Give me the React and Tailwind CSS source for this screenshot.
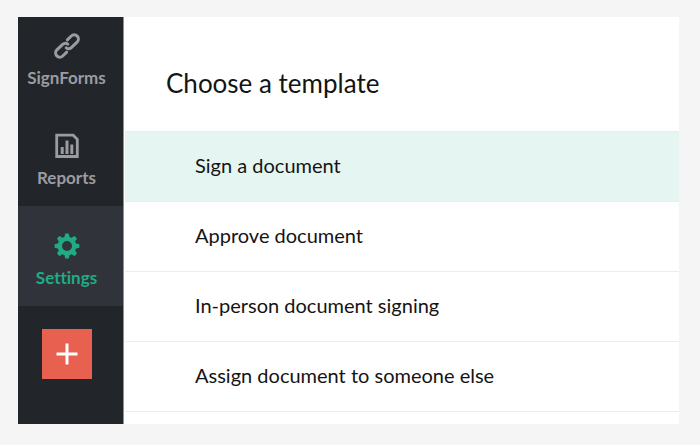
import { useState } from "react";
import clsx from "clsx";

const LinkIcon = () => (
  <svg viewBox="0 0 26 26" className="size-[26px] overflow-visible" fill="none" stroke="currentColor" strokeWidth="3" strokeLinecap="round" aria-hidden="true">
    <g transform="rotate(-44 13 13)">
      {/* lower left link, then upper right link */}
      <path d="M8.5 17.2H3a4.2 4.2 0 0 1 0-8.4h8a4.2 4.2 0 0 1 3.9 3.4" />
      <path d="M17.5 8.8H23a4.2 4.2 0 0 1 0 8.4h-8a4.2 4.2 0 0 1-3.9-3.4" />
    </g>
  </svg>
);

const ReportIcon = () => (
  <svg viewBox="0 0 26 26" className="size-[26px]" fill="none" stroke="currentColor" aria-hidden="true">
    <path d="M2.7 2.2h16.5l4.1 4.1v17.2H2.7z" strokeWidth="2.8" />
    <path d="M8.2 14v7M13 7.5v13.5M17.8 11.5v9.5" strokeWidth="3" />
  </svg>
);

const TEETH = [0, 45, 90, 135, 180, 225, 270, 315];

const GearIcon = () => (
  <svg viewBox="0 0 26 26" className="size-[26px]" fill="currentColor" aria-hidden="true">
    <circle cx="13" cy="13" r="7.2" fill="none" stroke="currentColor" strokeWidth="4.4" />
    {TEETH.map((a) => (
      <path key={a} d="M10.2 5.5L11 1.2Q11.1 .6 11.7 .6h2.6q.6 0 .7.6L15.8 5.5z" transform={`rotate(${a} 13 13)`} />
    ))}
  </svg>
);

const NAV = [
  { label: "SignForms", Icon: LinkIcon, pad: "pt-4" },
  { label: "Reports", Icon: ReportIcon, pad: "pt-[27px]" },
  { label: "Settings", Icon: GearIcon, pad: "pt-[27px]" },
];

const TEMPLATES = [
  "Sign a document",
  "Approve document",
  "In-person document signing",
  "Assign document to someone else",
];

const Sidebar = () => {
  const [active, setActive] = useState("Settings");

  return (
    <nav className="flex w-[106px] shrink-0 flex-col items-center border-r border-[#8d8f92] bg-[#222529]">
      {NAV.map(({ label, Icon, pad }) => (
        <button
          key={label}
          type="button"
          onClick={() => setActive(label)}
          className={clsx(
            "flex w-full flex-col items-center gap-[7px] pr-2 pb-4 text-[17px] leading-6 font-bold [font-variant-ligatures:none]",
            pad,
            active === label ? "bg-[#31333b] text-[#20ab85]" : "text-[#9b9ca1]"
          )}
        >
          <Icon />
          {label}
        </button>
      ))}
      <button
        type="button"
        aria-label="Add"
        className="mt-[23px] mr-2 flex size-[50px] items-center justify-center bg-[#e8604f] text-white"
      >
        <svg viewBox="0 0 22 22" className="size-[22px]" stroke="currentColor" strokeWidth="3" aria-hidden="true">
          <path d="M11 .5v21M.5 11h21" />
        </svg>
      </button>
    </nav>
  );
};

const App = () => {
  const [selected, setSelected] = useState(TEMPLATES[0]);

  return (
    <div className="min-h-screen bg-[#f5f5f5] pt-[17px] pr-[21px] pb-[21px] pl-[18px] font-['Lato',sans-serif]">
      <div className="flex bg-white">
        <Sidebar />
        <main className="min-w-0 flex-1 pb-3 pl-px text-[#141414]">
          <h1 className="px-[41px] pt-[50px] pb-8 text-[26px] leading-8">
            Choose a template
          </h1>
          <ul className="border-b border-[#ececec]">
            {TEMPLATES.map((name) => (
              <li key={name} className="border-t border-[#ececec]">
                <button
                  type="button"
                  onClick={() => setSelected(name)}
                  className={clsx(
                    "block w-full px-[70px] pt-5 pb-[22px] text-left text-[20px] leading-[27px]",
                    selected === name && "bg-[#e5f6f2]"
                  )}
                >
                  {name}
                </button>
              </li>
            ))}
          </ul>
        </main>
      </div>
    </div>
  );
};

export default App;
